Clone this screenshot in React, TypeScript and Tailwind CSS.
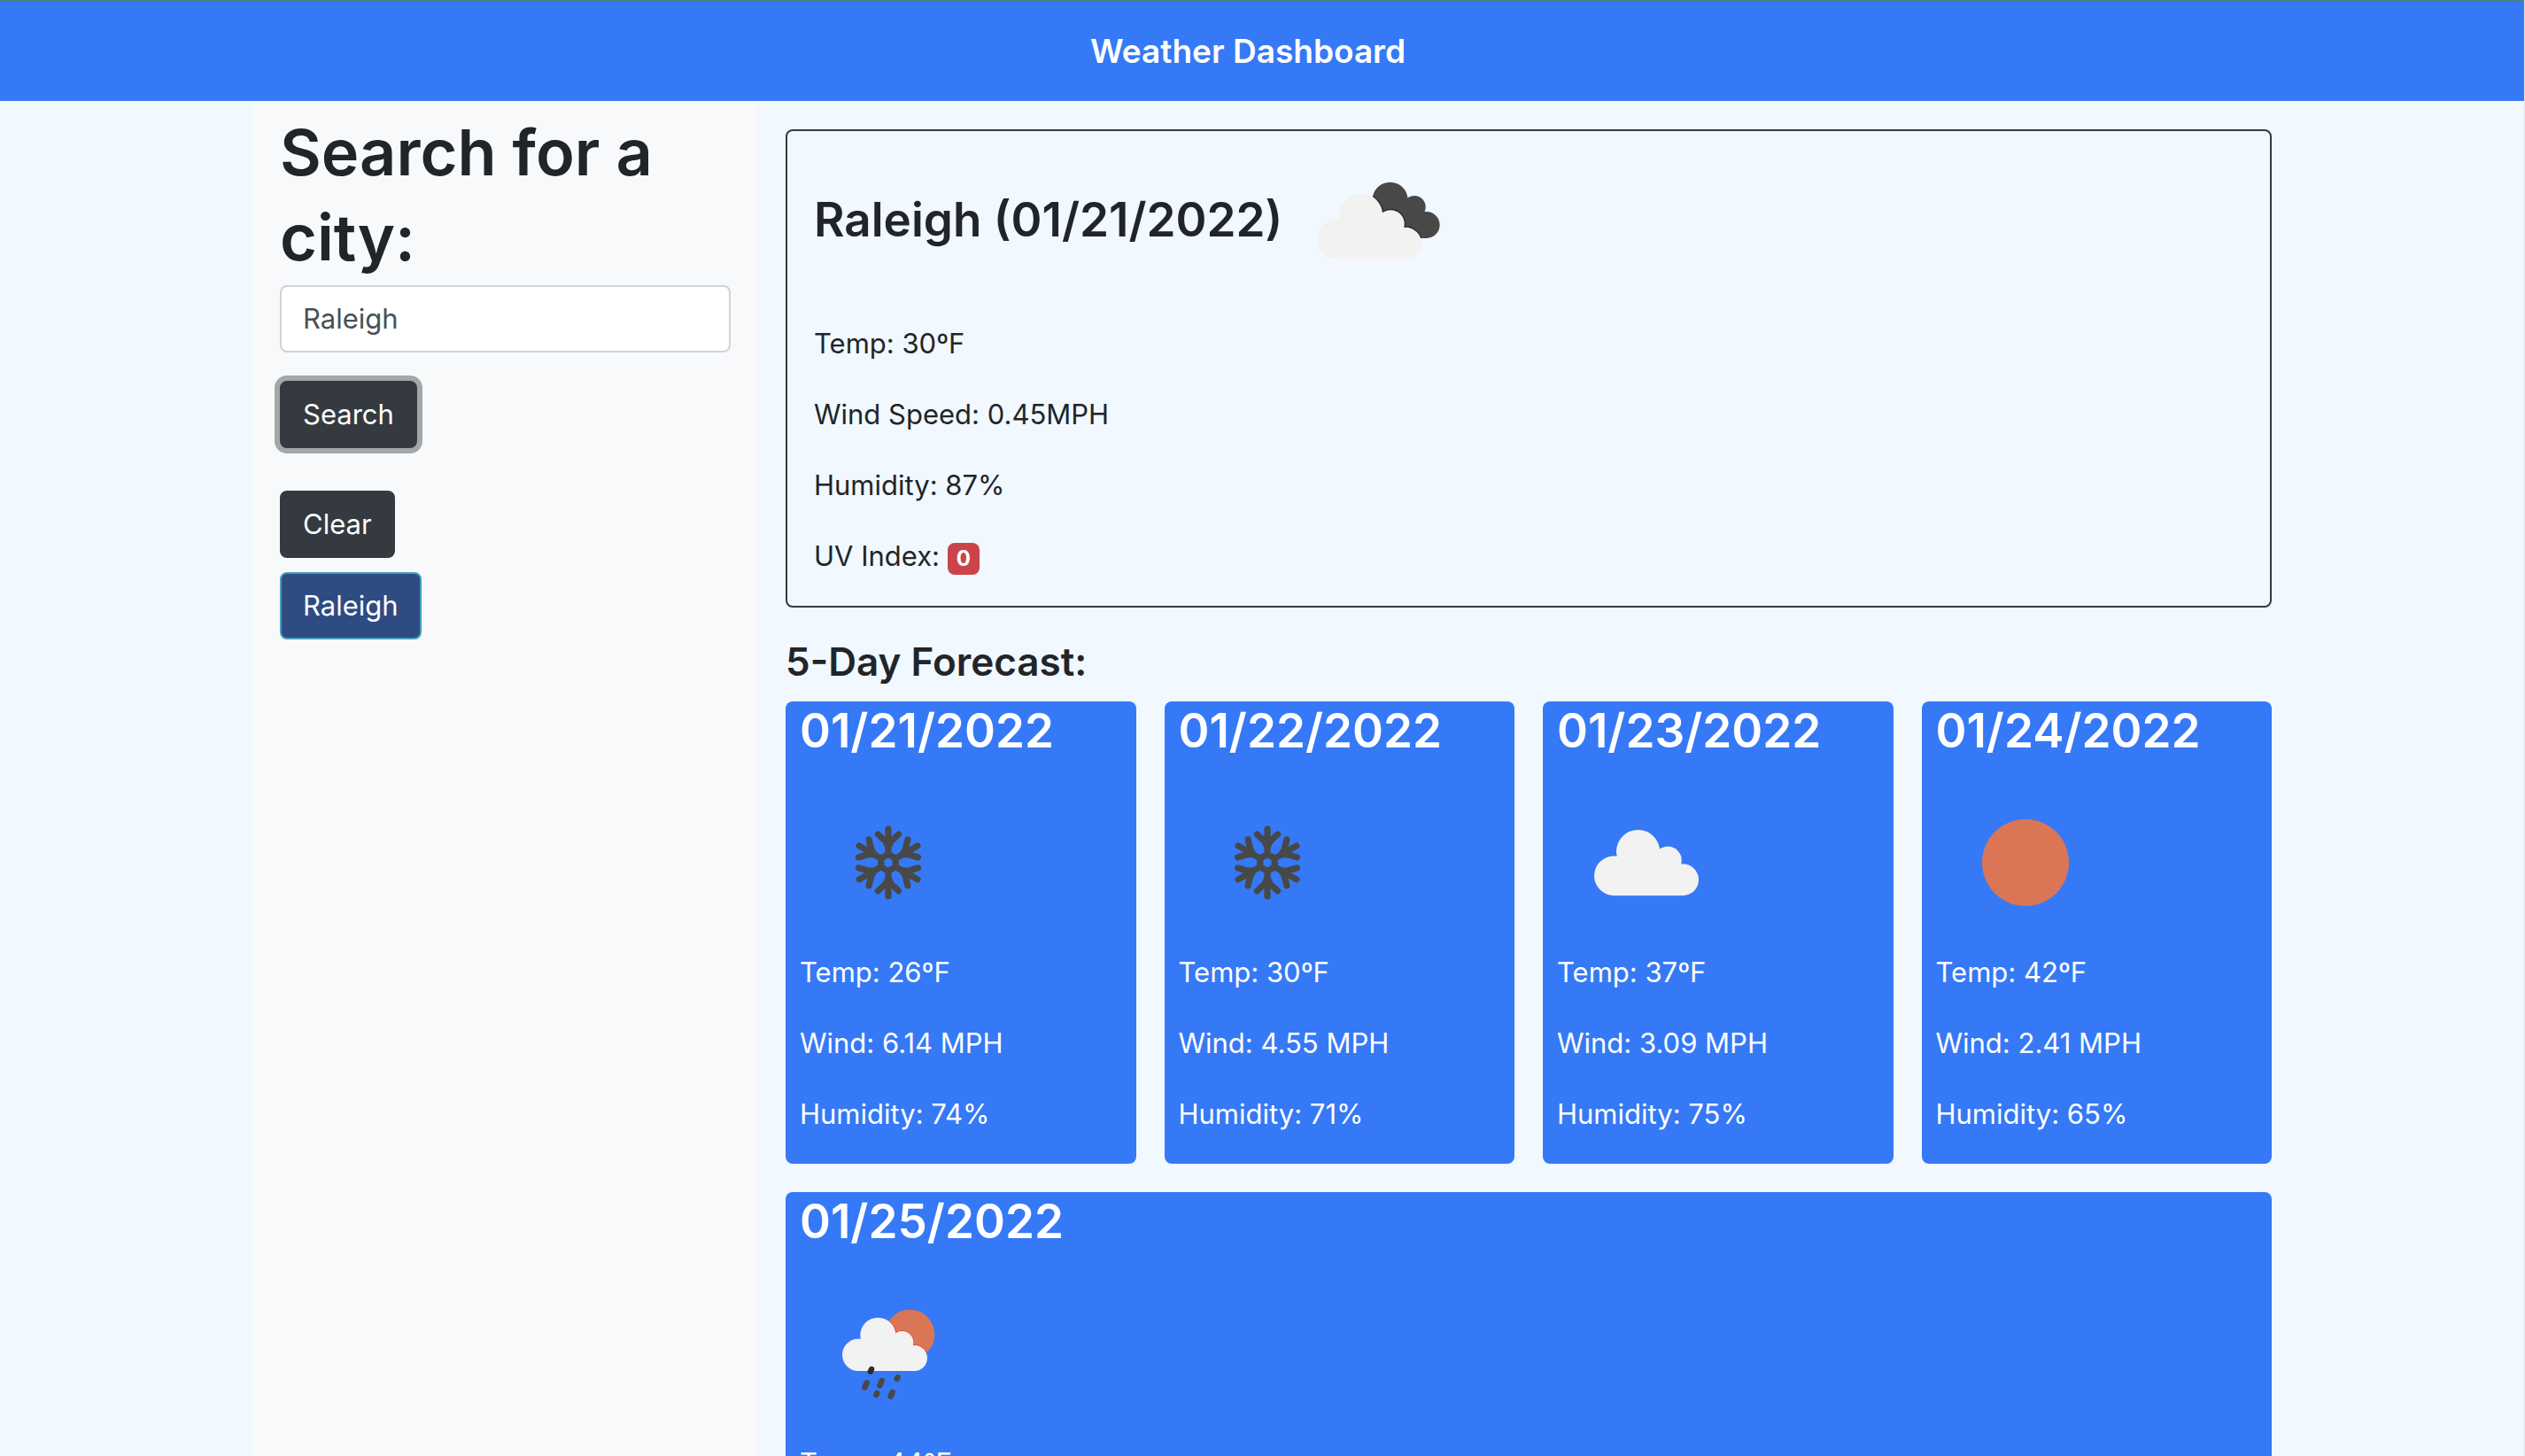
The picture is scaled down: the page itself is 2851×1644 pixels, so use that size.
import { FormEvent, useState } from "react";

type IconName = "snow" | "cloud" | "sun" | "sunRain" | "brokenClouds";

type Day = {
  date: string;
  icon: IconName;
  readings: string[];
};

const current = {
  city: "Raleigh",
  date: "01/21/2022",
  readings: ["Temp: 30ºF", "Wind Speed: 0.45MPH", "Humidity: 87%"],
  uv: 0,
};

const days: Day[] = [
  { date: "01/21/2022", icon: "snow", readings: ["Temp: 26ºF", "Wind: 6.14 MPH", "Humidity: 74%"] },
  { date: "01/22/2022", icon: "snow", readings: ["Temp: 30ºF", "Wind: 4.55 MPH", "Humidity: 71%"] },
  { date: "01/23/2022", icon: "cloud", readings: ["Temp: 37ºF", "Wind: 3.09 MPH", "Humidity: 75%"] },
  { date: "01/24/2022", icon: "sun", readings: ["Temp: 42ºF", "Wind: 2.41 MPH", "Humidity: 65%"] },
  { date: "01/25/2022", icon: "sunRain", readings: ["Temp: 44ºF"] },
];

/* Cloud silhouette in a 288 x 181 box. */
function CloudShape() {
  return (
    <>
      <circle cx="121" cy="60" r="60" />
      <circle cx="54.5" cy="126.5" r="54.5" />
      <circle cx="203" cy="84" r="38" />
      <circle cx="244.5" cy="137.5" r="43.5" />
      <path d="M54.5 181H244.5V100L160 60H90L54.5 100Z" />
    </>
  );
}

function Snow() {
  return (
    <g transform="translate(100 100)" stroke="#484848" strokeWidth="7.2" strokeLinecap="round" strokeLinejoin="round" fill="none">
      <path d="M0 -9.5L8.2 -4.8V4.8L0 9.5L-8.2 4.8V-4.8Z" />
      {[0, 60, 120, 180, 240, 300].map((angle) => (
        <g key={angle} transform={`rotate(${angle})`}>
          <path d="M0 -10V-38" />
          <path d="M-11.6 -32L0 -21L11.6 -32" />
          <path d="M-2 -21.5L0 -18L2 -21.5Z" />
        </g>
      ))}
    </g>
  );
}

function SunRain() {
  return (
    <>
      <clipPath id="sun-disc">
        <circle cx="124.3" cy="78.7" r="28" />
      </clipPath>
      <circle cx="124.3" cy="78.7" r="28" fill="#da7656" />
      <g clipPath="url(#sun-disc)">
        <g transform="translate(48 59.7) scale(0.3333)" fill="#de5a38" stroke="#de5a38" strokeWidth="6">
          <CloudShape />
        </g>
      </g>
      <g transform="translate(48 59.7) scale(0.3333)" fill="#f2f2f2">
        <CloudShape />
      </g>
      <g stroke="#484848" strokeWidth="6.4" strokeLinecap="round">
        <path d="M81 118L79.8 120.6" stroke="#2c2c2c" />
        <path d="M75.7 133.2L73.3 138.6" />
        <path d="M92.7 131L90.4 136.4" />
        <path d="M110.6 127L109.6 129" />
        <path d="M87.2 145L86.2 147" />
        <path d="M104.7 144L102.6 148.6" />
      </g>
    </>
  );
}

function DarkCloudShape() {
  return (
    <>
      <circle cx="113.6" cy="77.7" r="20" />
      <circle cx="141" cy="85.7" r="12.7" />
      <circle cx="154.6" cy="106" r="15" />
      <path d="M100 90L118 62L154 95V121L110 120Z" />
    </>
  );
}

function BrokenClouds() {
  return (
    <>
      <clipPath id="dark-cloud">
        <circle cx="113.6" cy="77.7" r="20" />
        <circle cx="141" cy="85.7" r="12.7" />
        <circle cx="154.6" cy="106" r="15" />
        <path d="M100 90L118 62L154 95V121L110 120Z" />
      </clipPath>
      <g fill="#484848">
        <DarkCloudShape />
      </g>
      <g clipPath="url(#dark-cloud)">
        <g transform="translate(31 70.3) scale(0.4097)" stroke="#262627" strokeWidth="6">
          <CloudShape />
        </g>
      </g>
      <g transform="translate(31 70.3) scale(0.4097)" fill="#f2f2f0">
        <CloudShape />
      </g>
    </>
  );
}

function WeatherIcon({ name }: { name: IconName }) {
  return (
    <svg viewBox="0 0 200 200" className="block size-[200px] shrink-0" aria-hidden="true">
      {name === "snow" && <Snow />}
      {name === "cloud" && (
        <g transform="translate(42 63) scale(0.4097)" fill="#f2f2f2">
          <CloudShape />
        </g>
      )}
      {name === "sun" && <circle cx="101" cy="100" r="49" fill="#da7656" />}
      {name === "sunRain" && <SunRain />}
      {name === "brokenClouds" && <BrokenClouds />}
    </svg>
  );
}

const buttonBase =
  "rounded-lg border-2 px-6 py-3 text-[31px] leading-[48px] text-white outline-none";

function SearchPanel() {
  const [city, setCity] = useState("Raleigh");
  const submit = (event: FormEvent) => event.preventDefault();

  return (
    <aside className="w-1/4 shrink-0 bg-[#f8f9fa] pt-[10px] pr-[30px] pl-[31px]">
      <form onSubmit={submit}>
        <h1 className="text-[72px] leading-[96px] font-semibold">
          <label htmlFor="city">Search for a city:</label>
        </h1>
        <input
          id="city"
          type="text"
          value={city}
          onChange={(event) => setCity(event.target.value)}
          className="mt-[6px] block w-full rounded-lg border-2 border-[#ced4da] bg-white px-6 py-3 text-[31px] leading-[48px] text-[#495057] outline-none"
        />
        <button
          type="submit"
          className={`${buttonBase} mt-8 block border-[#343a40] bg-[#343a40] ring-6 ring-[#a4a7a9]`}
        >
          Search
        </button>
      </form>
      <div className="mt-12 flex flex-col items-start gap-4">
        <button type="button" onClick={() => setCity("")} className={`${buttonBase} border-[#343a40] bg-[#343a40]`}>
          Clear
        </button>
        <button type="button" onClick={() => setCity("Raleigh")} className={`${buttonBase} border-[#459fb5] bg-[#2e4b82]`}>
          Raleigh
        </button>
      </div>
    </aside>
  );
}

function CurrentWeather() {
  return (
    <section className="rounded-lg border-2 border-[#343a40] px-[30px]">
      <div className="flex items-center gap-2">
        <h2 className="text-[53px] leading-[66px] font-semibold">
          {current.city} ({current.date})
        </h2>
        <WeatherIcon name="brokenClouds" />
      </div>
      <div className="mt-4 mb-8 flex flex-col gap-8">
        {current.readings.map((reading) => (
          <p key={reading}>{reading}</p>
        ))}
        <p>
          UV Index:{" "}
          <span className="inline-block rounded-lg bg-[#cb444a] px-[10px] py-[6px] text-2xl leading-6 font-bold text-white">
            {current.uv}
          </span>
        </p>
      </div>
    </section>
  );
}

function DayCard({ day }: { day: Day }) {
  return (
    <article className="rounded-lg bg-[#3579f6] px-4 text-white last:col-span-4">
      <h3 className="mb-4 text-[53px] leading-[66px] font-semibold">{day.date}</h3>
      <WeatherIcon name={day.icon} />
      <div className="mb-8 flex flex-col gap-8">
        {day.readings.map((reading) => (
          <p key={reading}>{reading}</p>
        ))}
      </div>
    </article>
  );
}

export default function App() {
  return (
    <div className="flex h-screen flex-col overflow-hidden border-r border-[#e2e5e8] bg-[#f1f8ff] font-['Inter','Liberation_Sans',sans-serif] text-[31px] leading-[48px] text-[#212529]">
      <header className="flex shrink-0 justify-center border-t-2 border-[#4a7f88] bg-[#3579f6] px-8 py-[26px]">
        <a href="#" className="mr-8 text-[37px] leading-[60px] font-semibold text-white">
          Weather Dashboard
        </a>
      </header>
      <div className="flex min-h-0 grow px-[10%]">
        <SearchPanel />
        <main className="min-w-0 grow pt-8 pl-8">
          <CurrentWeather />
          <h2 className="mt-8 mb-4 text-[44px] leading-[58px] font-semibold">5-Day Forecast:</h2>
          <div className="grid grid-cols-4 gap-8">
            {days.map((day) => (
              <DayCard key={day.date} day={day} />
            ))}
          </div>
        </main>
      </div>
    </div>
  );
}
